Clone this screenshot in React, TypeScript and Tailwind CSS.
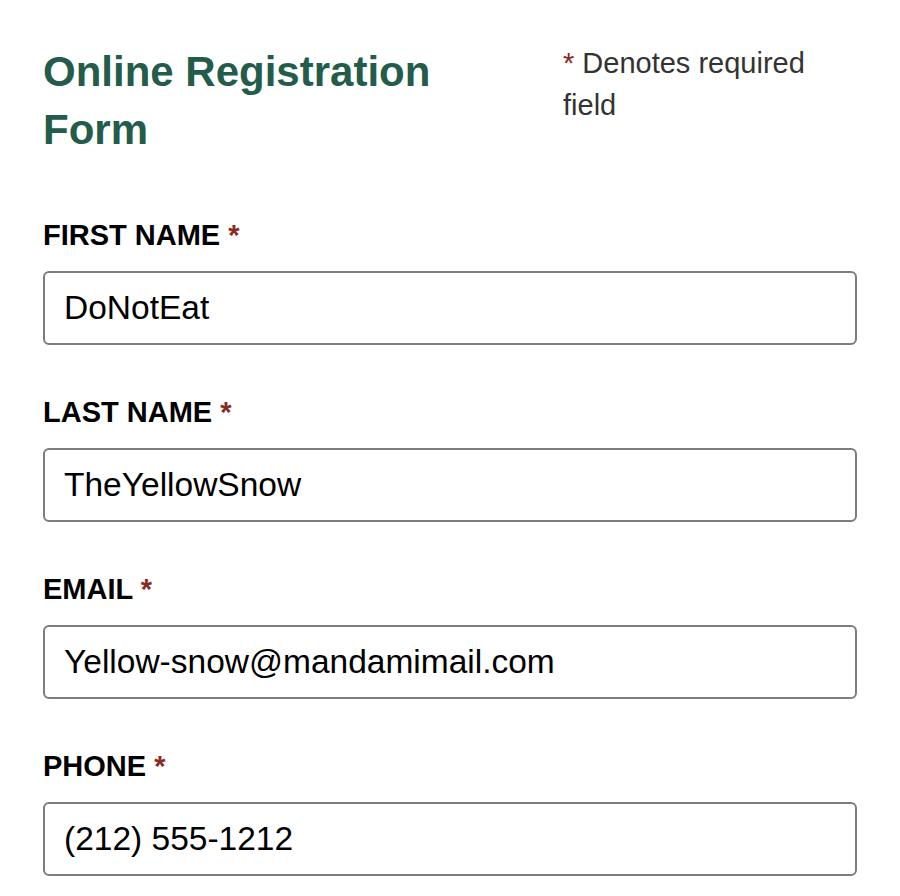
const fields = [
  { label: "FIRST NAME", value: "DoNotEat" },
  { label: "LAST NAME", value: "TheYellowSnow" },
  { label: "EMAIL", value: "Yellow-snow@mandamimail.com" },
  { label: "PHONE", value: "(212) 555-1212" },
];

const App = () => {
  return (
    <div className="min-h-[896px] bg-white px-[43px] pt-[43px] font-['Liberation_Sans',Arial,sans-serif]">
      <div className="grid grid-cols-[440px_260px] gap-x-[80px]">
        <h1 className="text-[42px] font-bold leading-[58px] text-[#245c4b]">
          Online Registration Form
        </h1>
        <p className="-mt-[1px] text-[29px] leading-[42px] text-[#333333]">
          <span className="text-[#8b2a1f]">* </span>Denotes required field
        </p>
      </div>

      <form className="mt-[59px] flex flex-col gap-[50px]">
        {fields.map((f) => (
          <div key={f.label}>
            <label className="block text-[29px] font-bold leading-[34px] text-black">
              {f.label} <span className="text-[#8b2a1f]">*</span>
            </label>
            <input
              readOnly
              value={f.value}
              className="mt-[19px] block h-[74px] w-full rounded-[6px] border-2 border-[#7d7d7d] bg-white px-[19px] pb-[1px] text-[33.5px] text-black outline-none font-['Liberation_Sans',Arial,sans-serif]"
            />
          </div>
        ))}
      </form>
    </div>
  );
};

export default App;
